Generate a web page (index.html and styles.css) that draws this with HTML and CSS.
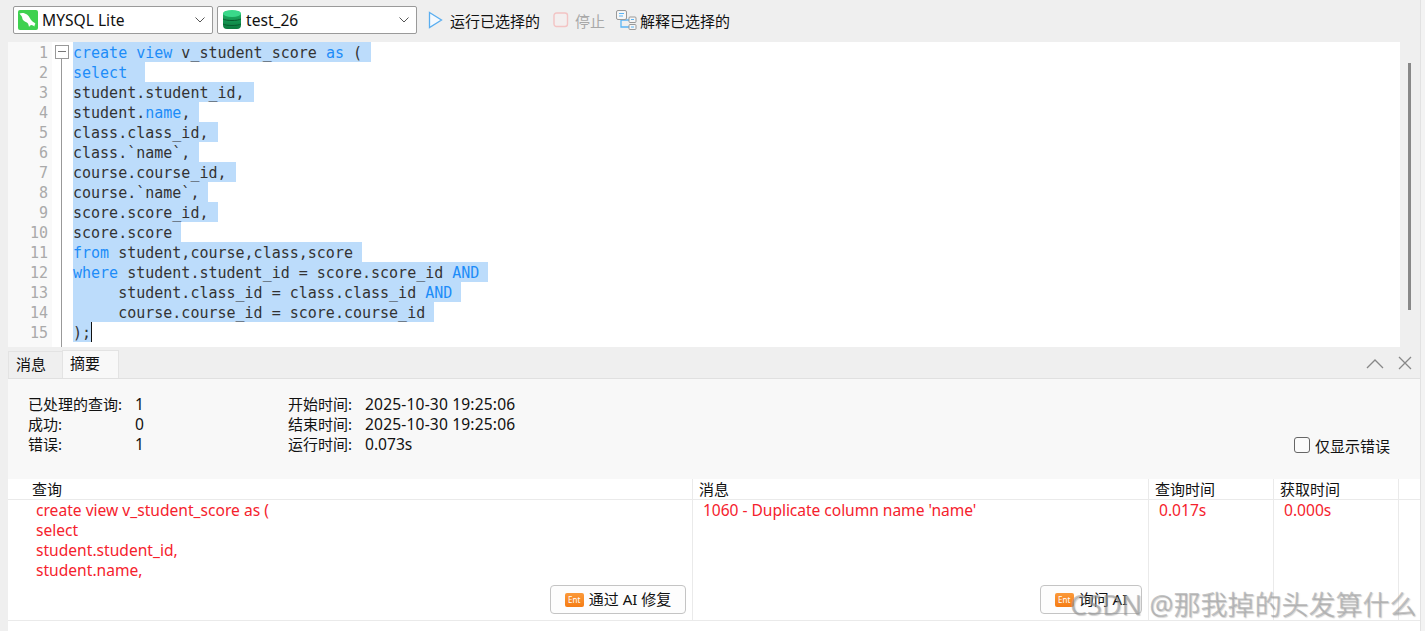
FILE: index.html
```html
<!DOCTYPE html>
<html lang="zh">
<head>
<meta charset="utf-8">
<title>MySQL view</title>
<link rel="stylesheet" href="styles.css">
</head>
<body>
<div class="app">
  <div class="toolbar">
    <div class="select conn">
      <svg class="sel-icon" width="20" height="20" viewBox="0 0 20 20"><rect width="20" height="20" rx="2" fill="#3ed14f"/><path d="M1.500 3.500C4 2.500 7 3 9 4.500c2.500 2 3 4.500 5 6.500 1.500 1.300 3 2 3.500 3-.6.300-1 1-1 2.500-1-.8-2-1.200-3-1.500-1 .2-1.800.8-2.500 2-.3-1.800-.6-3-1.500-4-1.500-1-3-1.500-4.500-3C4 8.800 4.500 7 3.500 6 2.800 5.300 2 4.500 1.500 3.500z" fill="#fff"/></svg>
      <span class="sel-text lat">MYSQL Lite</span>
      <svg class="caret" width="10" height="6" viewBox="0 0 10 6"><path d="M.5.5 5 5 9.500.5" fill="none" stroke="#555"/></svg>
    </div>
    <div class="select db">
      <svg class="sel-icon" width="18" height="20" viewBox="0 0 18 20"><defs><linearGradient id="g" x1="0" x2="0" y1="0" y2="1"><stop offset="0" stop-color="#1fb768"/><stop offset="1" stop-color="#0b7a3e"/></linearGradient></defs><rect y="1" width="18" height="18" rx="4" fill="url(#g)"/><ellipse cx="9" cy="3.500" rx="9" ry="3.500" fill="#3ad98a"/><path d="M0 9c3 2 15 2 18 0M0 14c3 2 15 2 18 0" stroke="#075c2e" fill="none"/></svg>
      <span class="sel-text lat">test_26</span>
      <svg class="caret" width="10" height="6" viewBox="0 0 10 6"><path d="M.5.5 5 5 9.500.5" fill="none" stroke="#555"/></svg>
    </div>
    <div class="tool run">
      <svg width="15" height="18" viewBox="0 0 15 18"><path d="M1.500 1.500 13.500 9 1.500 16.500z" fill="#f4f9fe" stroke="#5aaef0" stroke-width="1.300"/></svg>
      <span>运行已选择的</span>
    </div>
    <div class="tool stop">
      <svg width="16" height="16" viewBox="0 0 16 16"><rect x="1" y="1" width="13.500" height="13.500" rx="2.500" fill="#f3efef" stroke="#f3c4c4" stroke-width="1.400"/></svg>
      <span>停止</span>
    </div>
    <div class="tool explain">
      <svg width="21" height="20" viewBox="0 0 21 20"><path d="M5 10v7h8M5 10h8" fill="none" stroke="#5ab4f5" stroke-width="1.300"/><rect x=".5" y=".5" width="10" height="9" rx="1.500" fill="#f6f6f6" stroke="#999"/><path d="M3 3.500h5M3 6h4" stroke="#5ab4f5"/><rect x="13" y="7" width="7" height="5.500" rx="1" fill="#f6f6f6" stroke="#999"/><rect x="13" y="14.500" width="7" height="5" rx="1" fill="#f6f6f6" stroke="#999"/><path d="M15 9.500h3M15 17h3" stroke="#5ab4f5"/></svg>
      <span>解释已选择的</span>
    </div>
  </div>

  <div class="editor-row">
    <div class="editor">
      <div class="gutter">
        <div class="num">1</div><div class="num">2</div><div class="num">3</div><div class="num">4</div><div class="num">5</div>
        <div class="num">6</div><div class="num">7</div><div class="num">8</div><div class="num">9</div><div class="num">10</div>
        <div class="num">11</div><div class="num">12</div><div class="num">13</div><div class="num">14</div><div class="num">15</div>
      </div>
      <div class="fold"><div class="fold-box"></div><div class="fold-line"></div></div>
      <div class="code">
        <div class="line"><span class="sel"><b>create</b> <b>view</b> v_student_score <b>as</b> ( </span></div>
        <div class="line"><span class="sel"><b>select</b>  </span></div>
        <div class="line"><span class="sel">student.student_id, </span></div>
        <div class="line"><span class="sel">student.<b>name</b>, </span></div>
        <div class="line"><span class="sel">class.class_id, </span></div>
        <div class="line"><span class="sel">class.`name`, </span></div>
        <div class="line"><span class="sel">course.course_id, </span></div>
        <div class="line"><span class="sel">course.`name`, </span></div>
        <div class="line"><span class="sel">score.score_id, </span></div>
        <div class="line"><span class="sel">score.score </span></div>
        <div class="line"><span class="sel"><b>from</b> student,course,class,score </span></div>
        <div class="line"><span class="sel"><b>where</b> student.student_id = score.score_id <b>AND</b> </span></div>
        <div class="line"><span class="sel">     student.class_id = class.class_id <b>AND</b> </span></div>
        <div class="line"><span class="sel">     course.course_id = score.course_id </span></div>
        <div class="line"><span class="sel">);</span><span class="cursor"></span></div>
      </div>
    </div>
    <div class="vscroll"><div class="thumb"></div></div>
  </div>

  <div class="result">
    <div class="tabs">
      <div class="tab">消息</div>
      <div class="tab active">摘要</div>
      <div class="tab-spacer"></div>
      <svg class="tab-btn" width="20" height="12" viewBox="0 0 20 12"><path d="M2 11 10 3l8 8" fill="none" stroke="#888" stroke-width="1.300"/></svg>
      <svg class="tab-btn" width="14" height="14" viewBox="0 0 14 14"><path d="M1 1l12 12M13 1 1 13" fill="none" stroke="#888" stroke-width="1.300"/></svg>
    </div>
    <div class="summary">
      <div class="stats">
        <div class="stat-col first">
          <span>已处理的查询:</span><span class="lat">1</span>
          <span>成功:</span><span class="lat">0</span>
          <span>错误:</span><span class="lat">1</span>
        </div>
        <div class="stat-col second">
          <span>开始时间:</span><span class="lat stamp">2025-10-30 19:25:06</span>
          <span>结束时间:</span><span class="lat stamp">2025-10-30 19:25:06</span>
          <span>运行时间:</span><span class="lat">0.073s</span>
        </div>
      </div>
      <label class="only-err"><span class="check"></span><span>仅显示错误</span></label>
    </div>
    <div class="grid">
      <div class="grid-row head">
        <div class="cell c1">查询</div>
        <div class="cell c2">消息</div>
        <div class="cell c3">查询时间</div>
        <div class="cell c4">获取时间</div>
      </div>
      <div class="grid-row body">
        <div class="cell c1 err lat">
          <div>create view v_student_score as (</div>
          <div>select</div>
          <div>student.student_id,</div>
          <div>student.name,</div>
          <button class="ai-btn wide"><span class="ent">Ent</span>通过 AI 修复</button>
        </div>
        <div class="cell c2 err lat">
          <div class="msg">1060 - Duplicate column name 'name'</div>
          <button class="ai-btn narrow"><span class="ent">Ent</span>询问 AI</button>
        </div>
        <div class="cell c3 err lat">0.017s</div>
        <div class="cell c4 err lat">0.000s</div>
      </div>
    </div>
  </div>
  <div class="watermark">CSDN @那我掉的头发算什么</div>
</div>
</body>
</html>
```
FILE: styles.css
```css
* { box-sizing: border-box; }
html, body { margin: 0; height: 100%; overflow: hidden; }
body { font-family: "Noto Sans", "Noto Sans CJK SC", sans-serif; font-size: 15px; color: #111; background: #f3f3f3; }
.app { position: relative; display: flex; flex-direction: column; width: 1421px; height: 631px; padding-left: 8px; overflow: hidden; background: #efefef; border-right: 1px solid #e2e2e2; }
.lat { font-size: 15.6px; }

.toolbar { display: flex; flex: none; align-items: center; height: 42px; padding: 0 0 2px 5px; }
.select { display: flex; align-items: center; height: 28px; background: #fff; border: 1px solid #9a9a9a; border-radius: 2px; padding: 0 7px 0 4px; margin-right: 4px; }
.conn { width: 200px; }
.db { width: 200px; padding-left: 5px; }
.sel-icon { flex: none; }
.sel-text { flex: 1; margin-left: 4px; }
.db .sel-text { margin-left: 5px; }
.tool { display: flex; align-items: center; }
.run { margin-left: 7px; gap: 7px; }
.stop { margin-left: 13px; gap: 6px; color: #a8a8a8; }
.explain { margin-left: 11px; gap: 3px; }

.editor-row { display: flex; flex: none; height: 305px; }
.editor { display: flex; width: 1392px; height: 305px; background: #fff; overflow: hidden; font-family: "DejaVu Sans Mono", monospace; font-size: 15px; line-height: 20px; }
.gutter { width: 44px; background: #f9f9f9; color: #aaa; text-align: right; padding: 1px 4px 0 0; }
.num { height: 20px; }
.fold { position: relative; width: 21px; flex: none; }
.fold-box { position: absolute; left: 3px; top: 3px; width: 14px; height: 14px; border: 1px solid #999; background: #fff; }
.fold-box::after { content: ""; position: absolute; left: 2px; right: 2px; top: 5px; height: 1px; background: #777; }
.fold-line { position: absolute; left: 9px; top: 17px; bottom: 0; width: 1px; background: #999; }
.code { color: #333; }
.line { height: 20px; white-space: pre; }
.sel { background: #bcdcfb; display: inline-block; height: 20px; line-height: 22px; }
.code b { font-weight: 400; color: #1d8cf8; }
.cursor { display: inline-block; width: 1px; height: 20px; background: #111; vertical-align: top; }
.vscroll { position: relative; width: 20px; }
.thumb { position: absolute; left: 8px; top: 21px; width: 3px; height: 247px; background: #888; }

.result { display: flex; flex: 1; flex-direction: column; min-height: 0; width: 1412px; }
.tabs { display: flex; flex: none; align-items: center; height: 32px; border-bottom: 1px solid #e0e0e0; padding: 0 8px 0 0; }
.tab { height: 27px; margin-top: 4px; padding: 0 7px; width: 55px; border: 1px solid #e3e3e3; border-bottom: 0; line-height: 25px; }
.tab.active { height: 28px; margin-top: 3px; width: 57px; background: #f8f8f8; margin-left: -1px; }
.tab-spacer { flex: 1; }
.tab-btn { margin-left: 13px; flex: none; }

.summary { display: flex; flex: none; justify-content: space-between; height: 100px; padding: 15px 30px 0 20px; background: #f8f8f8; }
.stats { display: flex; line-height: 20px; }
.stat-col { display: grid; grid-auto-rows: 20px; }
.first { width: 260px; grid-template-columns: 107px 1fr; }
.second { grid-template-columns: 77px 1fr; }
.stamp { letter-spacing: .16px; }
.only-err { display: flex; align-items: center; gap: 5px; height: 20px; margin-top: 41px; }
.check { width: 16px; height: 16px; border: 1px solid #666; border-radius: 3px; background: #fbfbfb; }

.grid { flex: 1; background: #fff; }
.grid-row { display: flex; }
.head { height: 21px; border-bottom: 1px solid #eaeaea; line-height: 21px; }
.body { height: 121px; border-bottom: 1px solid #eaeaea; }
.cell { position: relative; border-right: 1px solid #eaeaea; flex: none; }
.c1 { width: 685px; padding-left: 24px; }
.c2 { width: 456px; padding-left: 6px; }
.c3 { width: 125px; padding-left: 6px; }
.c4 { width: 125px; padding-left: 6px; }
.body .cell { line-height: 20px; }
.body .c1 { padding-left: 28px; }
.body .c2 { padding-left: 10px; }
.body .c3, .body .c4 { padding-left: 10px; }
.msg { letter-spacing: -.05px; }
.err { color: #f5222d; }
.ai-btn { position: absolute; top: 85px; display: flex; align-items: center; justify-content: center; gap: 5px; height: 29px; background: #fdfdfd; border: 1px solid #c4c4c4; border-radius: 4px; font-family: inherit; font-size: 15px; color: #111; padding: 0 0 2px; }
.wide { left: 542px; width: 136px; }
.narrow { left: 347px; width: 102px; }
.ent { display: inline-block; width: 19px; height: 14px; margin-top: 2px; border-radius: 2px; background: linear-gradient(#fb9a3a, #f57c14); color: #fff; font-size: 8px; line-height: 14px; text-align: center; }

.watermark { position: absolute; left: 1070px; top: 586px; font-size: 27px; line-height: 38px; color: rgba(150,150,150,.55); text-shadow: 1px 1px 1px rgba(120,120,120,.35); white-space: nowrap; pointer-events: none; }
```
